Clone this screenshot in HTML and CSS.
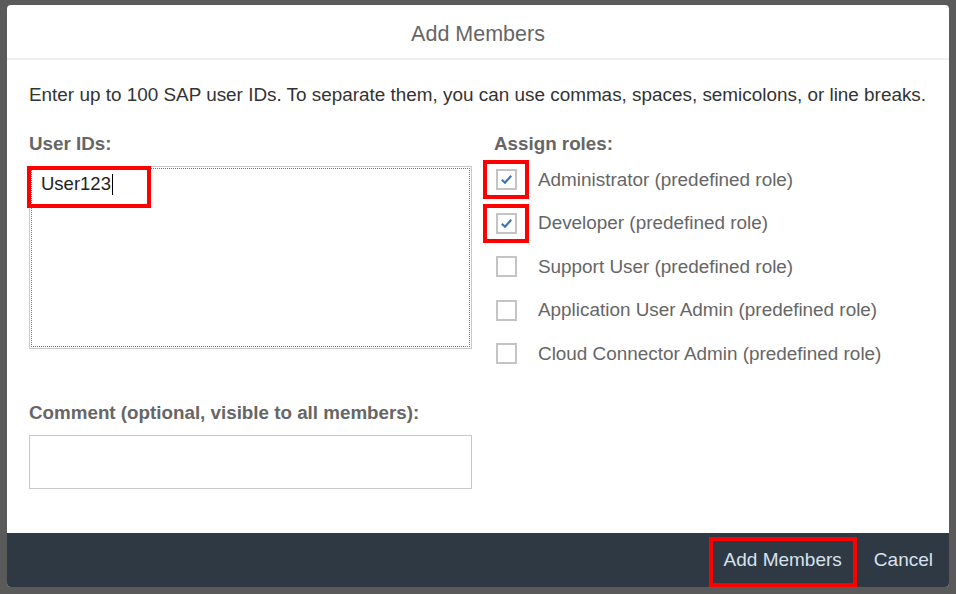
FILE: index.html
```html
<!DOCTYPE html>
<html>
<head>
<meta charset="utf-8">
<link rel="stylesheet" href="styles.css">
</head>
<body>
<div class="dialog">
  <div class="header">Add Members</div>
  <div class="content">
    <p class="intro">Enter up to 100 SAP user IDs. To separate them, you can use commas, spaces, semicolons, or line breaks.</p>
    <div class="columns">
      <div class="left">
        <div class="label">User IDs:</div>
        <div class="textarea">
          <span class="typed">User123<span class="caret"></span></span>
          <span class="mark mark-ids"></span>
        </div>
        <div class="label comment-label">Comment (optional, visible to all members):</div>
        <div class="input"></div>
      </div>
      <div class="right">
        <div class="label">Assign roles:</div>
        <ul class="roles">
          <li class="role"><span class="box checked"><svg viewBox="0 0 13 13" width="13" height="13"><path d="M1.8 6.8 L5 9.8 L11.2 2.8" fill="none" stroke="#3a73b3" stroke-width="2.1"/></svg><span class="mark mark-box"></span></span>Administrator (predefined role)</li>
          <li class="role"><span class="box checked"><svg viewBox="0 0 13 13" width="13" height="13"><path d="M1.8 6.8 L5 9.8 L11.2 2.8" fill="none" stroke="#3a73b3" stroke-width="2.1"/></svg><span class="mark mark-box"></span></span>Developer (predefined role)</li>
          <li class="role"><span class="box"></span>Support User (predefined role)</li>
          <li class="role"><span class="box"></span>Application User Admin (predefined role)</li>
          <li class="role"><span class="box"></span>Cloud Connector Admin (predefined role)</li>
        </ul>
      </div>
    </div>
  </div>
  <div class="footer">
    <span class="btn primary">Add Members<span class="mark mark-btn"></span></span>
    <span class="btn">Cancel</span>
  </div>
</div>
</body>
</html>
```
FILE: styles.css
```css
* { box-sizing: border-box; }
html, body { margin: 0; height: 100%; }
body {
  background: #5a5a5a;
  padding: 5px 7px 7px 7px;
  font-family: "Liberation Sans", Arial, sans-serif;
}
.dialog {
  width: 942px;
  height: 582px;
  background: #fff;
  border-radius: 4px;
  display: flex;
  flex-direction: column;
  overflow: hidden;
}
.header {
  height: 55px;
  flex: none;
  border-bottom: 2px solid #efefef;
  display: flex;
  align-items: center;
  justify-content: center;
  padding-top: 6px;
  font-size: 21.5px;
  color: #666;
}
.content {
  flex: 1;
  padding: 0 22px;
}
.intro {
  margin: 24px 0 0 0;
  font-size: 18.9px;
  color: #333;
  line-height: 22px;
  white-space: nowrap;
}
.columns {
  display: grid;
  grid-template-columns: 443px 1fr;
  column-gap: 22px;
  margin-top: 27px;
}
.label {
  font-size: 18.8px;
  font-weight: bold;
  color: #666;
  line-height: 22px;
}
.textarea {
  position: relative;
  margin-top: 11px;
  height: 183px;
  border: 1px solid #c8c8c8;
  outline: 1px dotted #777;
  outline-offset: -3px;
  padding: 6px 11px;
  font-size: 18.5px;
  color: #222;
}
.typed { display: inline-flex; align-items: center; }
.caret {
  display: inline-block;
  width: 1px;
  height: 21px;
  background: #000;
  margin-left: 1px;
}
.mark {
  position: absolute;
  border: 4px solid #f00;
  pointer-events: none;
}
.mark-ids { left: -3px; top: -1px; width: 124px; height: 42px; }
.comment-label { margin-top: 53px; }
.input {
  margin-top: 11px;
  height: 54px;
  border: 1px solid #c8c8c8;
}
.roles {
  list-style: none;
  margin: 3px 0 0 0;
  padding: 0;
}
.role {
  height: 43.5px;
  display: flex;
  align-items: center;
  font-size: 18.9px;
  color: #666;
}
.box {
  position: relative;
  width: 21px;
  height: 21px;
  border: 2px solid #c4c4c4;
  margin: 0 21px 0 2px;
  display: inline-flex;
  align-items: center;
  justify-content: center;
  flex: none;
}
.mark-box { left: -15px; top: -11px; width: 46px; height: 39px; }
.footer {
  height: 54px;
  flex: none;
  background: #2f3944;
  display: flex;
  justify-content: flex-end;
  align-items: center;
  padding-right: 16px;
  gap: 32px;
}
.btn {
  position: relative;
  font-size: 19px;
  color: #d6e2ee;
}
.mark-btn { left: -15px; top: -12px; width: 148px; height: 50px; }
```
